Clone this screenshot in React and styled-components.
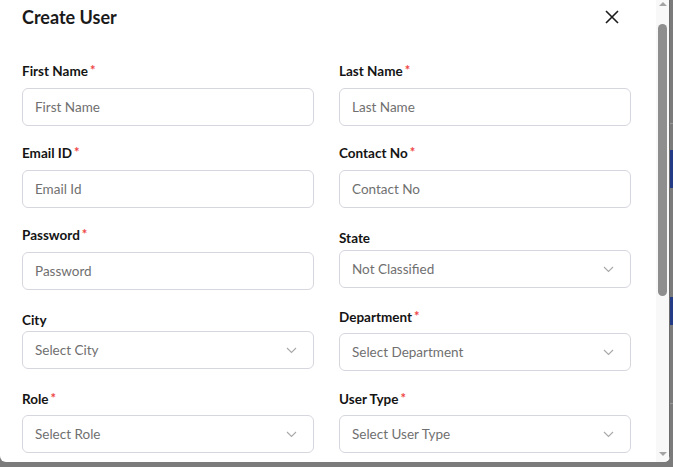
import React from 'react';
import styled, { createGlobalStyle } from 'styled-components';

const GlobalStyle = createGlobalStyle`
  html, body {
    margin: 0;
    padding: 0;
    background: #7b7b7b;
  }
  body {
    font-family: Lato, "Noto Sans", sans-serif;
  }
  * { box-sizing: border-box; }
`;

const Page = styled.div`
  width: 673px;
  height: 467px;
  display: flex;
  align-items: flex-start;
  overflow: hidden;
`;

const Modal = styled.div`
  width: 670px;
  height: 462px;
  background: #fff;
  border-radius: 0 0 6px 6px;
  display: flex;
  overflow: hidden;
`;

const Body = styled.div`
  flex: 1;
  padding: 0 24px 0 22px;
  overflow: hidden;
`;

const Header = styled.div`
  height: 34px;
  display: flex;
  align-items: center;
  justify-content: space-between;
`;

const Title = styled.h2`
  margin: 0;
  font-size: 18px;
  line-height: 24px;
  font-weight: 700;
  color: #1a1a1a;
`;

const CloseButton = styled.button`
  width: 26px;
  height: 26px;
  margin-right: 7px;
  padding: 0;
  border: 0;
  background: transparent;
  display: flex;
  align-items: center;
  justify-content: center;
  cursor: pointer;
`;

const Grid = styled.div`
  margin-top: 28px;
  display: grid;
  grid-template-columns: 292px 292px;
  column-gap: 25px;
  row-gap: 18px;
  grid-auto-rows: 64px;
`;

const Field = styled.div`
  display: flex;
  flex-direction: column;
`;

const Label = styled.label`
  margin-top: ${p => p.$offset}px;
  font-size: 13.5px;
  line-height: 18px;
  font-weight: 700;
  color: #141414;
`;

const Star = styled.span`
  color: #ef4444;
  font-size: 13px;
  margin-left: 2px;
  position: relative;
  top: -1px;
`;

const Input = styled.input`
  margin-top: ${p => p.$offset}px;
  height: 38px;
  width: 100%;
  border: 1px solid #d6d6de;
  border-radius: 6px;
  padding: 0 12px;
  font-family: inherit;
  font-size: 13.5px;
  color: #222;
  outline: none;
  &::placeholder { color: #707070; }
`;

const SelectBox = styled.div`
  margin-top: ${p => p.$offset}px;
  height: 38px;
  border: 1px solid #d6d6de;
  border-radius: 6px;
  padding: 0 16px 0 12px;
  display: flex;
  align-items: center;
  justify-content: space-between;
  font-size: 13.5px;
  color: #707070;
`;

const Track = styled.div`
  width: 14px;
  height: 100%;
  background: #f8f8f8;
  border-right: 1px solid #6c6c6c;
  display: flex;
  flex-direction: column;
  align-items: center;
`;

const ArrowUp = styled.div`
  margin-top: 2px;
  width: 0;
  height: 0;
  border-left: 4px solid transparent;
  border-right: 4px solid transparent;
  border-bottom: 4px solid #a3a3a3;
`;

const ArrowDown = styled.div`
  margin-top: auto;
  margin-bottom: 6px;
  width: 0;
  height: 0;
  border-left: 4px solid transparent;
  border-right: 4px solid transparent;
  border-top: 4px solid #a3a3a3;
`;

const Thumb = styled.div`
  margin-top: 18px;
  width: 9px;
  height: 272px;
  border-radius: 5px;
  background: #8e8e8e;
`;

const Edge = styled.div`
  width: 3px;
  height: 462px;
  display: flex;
  flex-direction: column;
`;

const EdgeBlock = styled.div`
  height: ${p => p.$h}px;
  background: ${p => p.$c};
`;

const Chevron = () => (
  <svg width="11" height="7" viewBox="0 0 11 7">
    <polyline points="1,1 5.5,5.5 10,1" fill="none" stroke="#a8a8a8" strokeWidth="1.1" />
  </svg>
);

const fields = [
  { label: 'First Name', req: true, ph: 'First Name' },
  { label: 'Last Name', req: true, ph: 'Last Name' },
  { label: 'Email ID', req: true, ph: 'Email Id' },
  { label: 'Contact No', req: true, ph: 'Contact No' },
  { label: 'Password', req: true, ph: 'Password' },
  { label: 'State', select: true, ph: 'Not Classified', gap: 3 },
  { label: 'City', select: true, ph: 'Select City', gap: 2 },
  { label: 'Department', req: true, select: true, ph: 'Select Department' },
  { label: 'Role', req: true, select: true, ph: 'Select Role' },
  { label: 'User Type', req: true, select: true, ph: 'Select User Type' },
];

export default function App() {
  return (
    <>
      <GlobalStyle />
      <Page>
        <Modal>
          <Body>
            <Header>
              <Title>Create User</Title>
              <CloseButton aria-label="Close">
                <svg width="14" height="14" viewBox="0 0 14 14">
                  <path d="M1 1 L13 13 M13 1 L1 13" stroke="#1c1c1c" strokeWidth="1.6" />
                </svg>
              </CloseButton>
            </Header>
            <Grid>
              {fields.map(f => (
                <Field key={f.label}>
                  <Label $offset={f.req ? 0 : 3}>
                    {f.label}
                    {f.req && <Star>*</Star>}
                  </Label>
                  {f.select ? (
                    <SelectBox $offset={f.gap ?? 7}>
                      <span>{f.ph}</span>
                      <Chevron />
                    </SelectBox>
                  ) : (
                    <Input $offset={8} placeholder={f.ph} />
                  )}
                </Field>
              ))}
            </Grid>
          </Body>
          <Track>
            <ArrowUp />
            <Thumb />
            <ArrowDown />
          </Track>
        </Modal>
        <Edge>
          <EdgeBlock $h={123} $c="#7b7b7b" />
          <EdgeBlock $h={1} $c="#999" />
          <EdgeBlock $h={26} $c="#7b7b7b" />
          <EdgeBlock $h={38} $c="#243c86" />
          <EdgeBlock $h={109} $c="#7b7b7b" />
          <EdgeBlock $h={28} $c="#243c86" />
          <EdgeBlock $h={78} $c="#7b7b7b" />
          <EdgeBlock $h={1} $c="#999" />
        </Edge>
      </Page>
    </>
  );
}
